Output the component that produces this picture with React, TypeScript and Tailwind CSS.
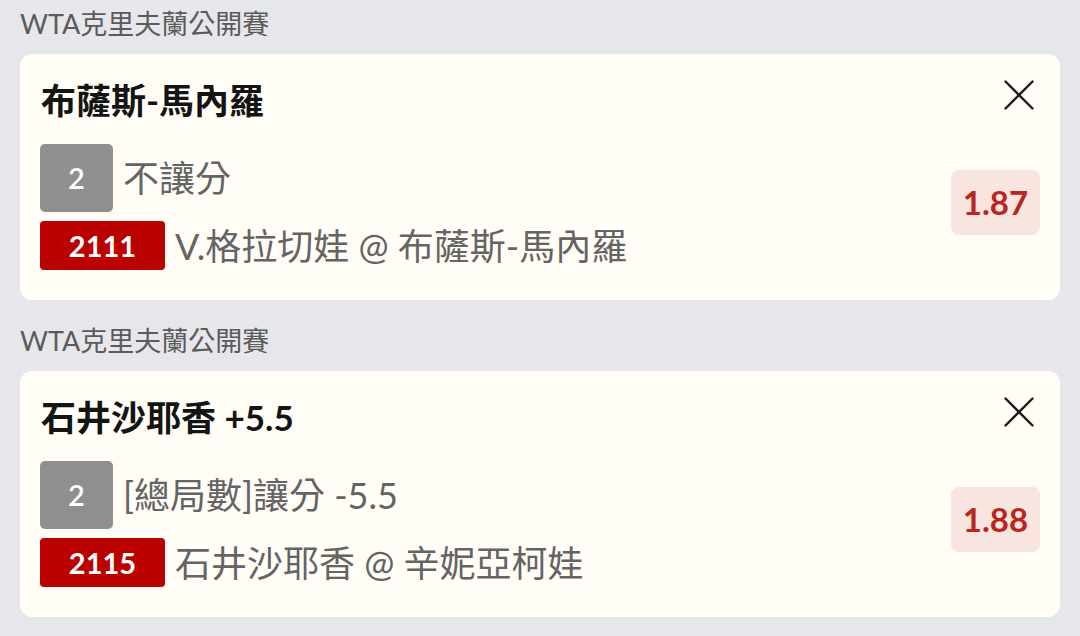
import React from "react";

interface Bet {
  league: string;
  title: string;
  code: string;
  market: string;
  matchCode: string;
  pick: string;
  odds: string;
}

const bets: Bet[] = [
  {
    league: "WTA克里夫蘭公開賽",
    title: "布薩斯-馬內羅",
    code: "2",
    market: "不讓分",
    matchCode: "2111",
    pick: "V.格拉切娃 @ 布薩斯-馬內羅",
    odds: "1.87",
  },
  {
    league: "WTA克里夫蘭公開賽",
    title: "石井沙耶香 +5.5",
    code: "2",
    market: "[總局數]讓分 -5.5",
    matchCode: "2115",
    pick: "石井沙耶香 @ 辛妮亞柯娃",
    odds: "1.88",
  },
];

const CloseIcon = () => (
  <svg width="30" height="30" viewBox="0 0 30 30" className="mr-[6px] shrink-0">
    <path d="M1.5 1.5 L28.5 28.5 M28.5 1.5 L1.5 28.5" stroke="#1a1a1a" strokeWidth="2.4" strokeLinecap="round" />
  </svg>
);

const BetCard = ({ bet }: { bet: Bet }) => (
  <div className="mb-[17px]">
    {/* League header */}
    <div className="h-[54px] px-5 pt-[6px] text-[27px] leading-[36px] text-[#5b5b5b]">
      {bet.league}
    </div>

    {/* Card */}
    <div className="mx-5 h-[246px] rounded-[12px] bg-[#fffdf5] px-5 pt-[26px]">
      <div className="flex items-start justify-between">
        <div className="text-[35px] leading-[40px] font-bold text-[#141414] pl-[1px]">
          {bet.title}
        </div>
        <CloseIcon />
      </div>

      <div className="mt-[24px] flex items-center justify-between">
        <div className="flex flex-col">
          <div className="flex items-center">
            <div className="w-[73px] h-[68px] rounded-[5px] bg-[#8f8f8f] text-white text-[29px] font-semibold flex items-center justify-center">
              {bet.code}
            </div>
            <span className="ml-[10px] text-[36px] leading-[40px] text-[#646464]">
              {bet.market}
            </span>
          </div>
          <div className="mt-[9px] flex items-center">
            <div className="w-[125px] h-[49px] rounded-[4px] bg-[#bb0000] text-white text-[29px] font-bold flex items-center justify-center">
              {bet.matchCode}
            </div>
            <span className="ml-[10px] text-[36px] leading-[40px] text-[#646464]">
              {bet.pick}
            </span>
          </div>
        </div>

        <div className="mb-[9px] w-[89px] h-[65px] rounded-[8px] bg-[#f8e5df] text-[#b8261f] text-[33px] font-bold flex items-center justify-center">
          {bet.odds}
        </div>
      </div>
    </div>
  </div>
);

const App = () => {
  return (
    <div className="w-[1080px] h-[636px] overflow-hidden bg-[#e6e7eb] font-['Lato','Noto_Sans_CJK_TC',sans-serif]">
      {bets.map((bet, i) => (
        <BetCard key={i} bet={bet} />
      ))}
    </div>
  );
};

export default App;
